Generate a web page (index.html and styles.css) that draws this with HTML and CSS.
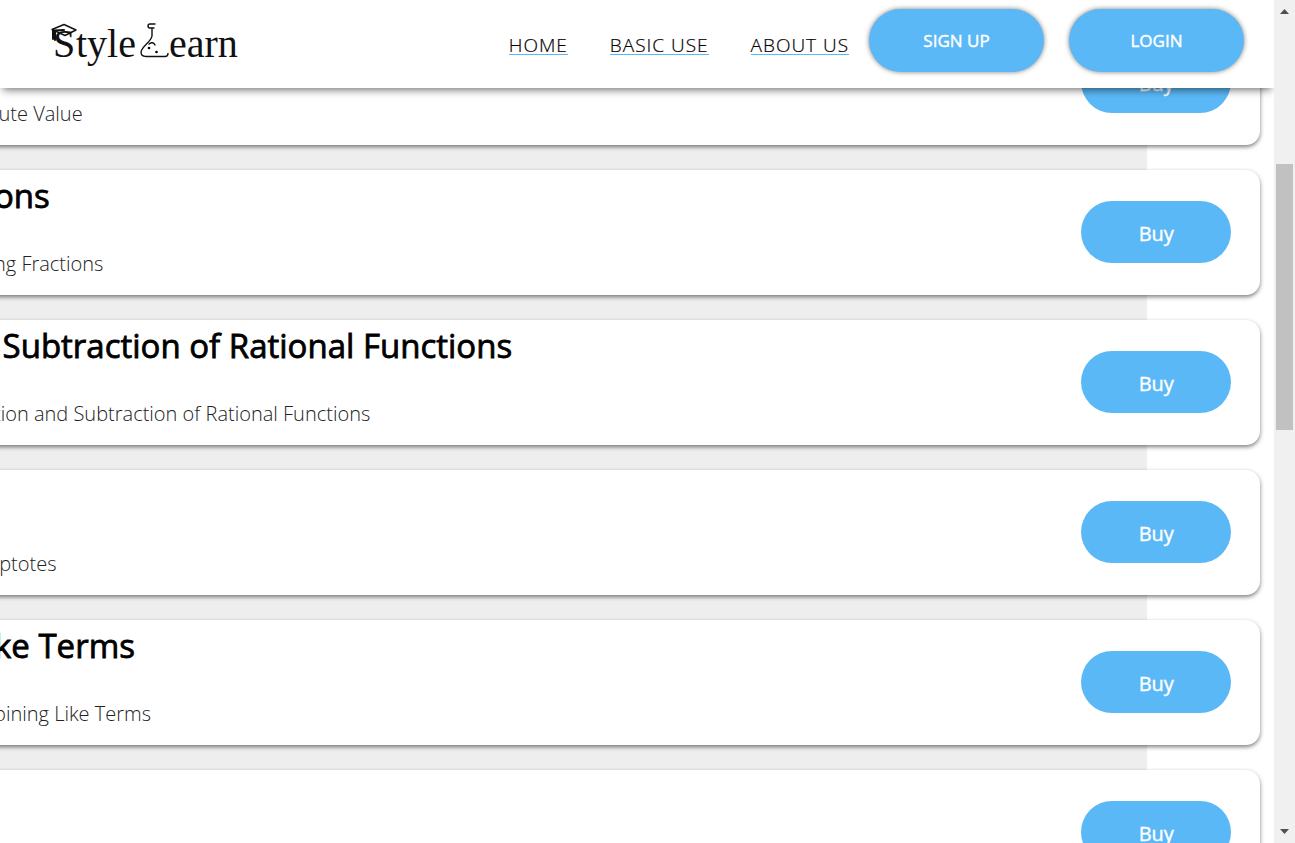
FILE: index.html
```html
<!DOCTYPE html>
<html lang="en">
<head>
<meta charset="utf-8">
<meta name="viewport" content="width=device-width, initial-scale=1">
<title>Style Learn</title>
<link rel="stylesheet" href="styles.css">
</head>
<body>
<div class="window">
  <div class="page">
    <header class="topbar">
      <a class="logo" href="#" aria-label="Style Learn">
        <svg width="196" height="50" viewBox="48 20 196 50">
          <g class="logo-text">
            <text x="53" y="57">S</text>
            <text x="76" y="57">tyle</text>
            <text x="169" y="57">earn</text>
          </g>
          <g fill="none" stroke="#111" stroke-width="1.4" stroke-linejoin="round" stroke-linecap="round">
            <path d="M52 29.500 64 24.500 76 30 65 35.500Z"/>
            <path d="M53 30V39M55 32V40M54 30.500 64 30" stroke-width="2"/>
            <path d="M155 24H150Q148 24 148 26T150 28H154M152 28V36C151 42 142 46 141 52Q141 56.500 146 56.500H165Q168 56.500 168 53.500M149 44Q153 41 155 45"/>
          </g>
          <circle cx="149" cy="48" r="1.300"/><circle cx="156.500" cy="52" r="1.300"/>
        </svg>
      </a>
      <nav class="nav">
        <a href="#">HOME</a>
        <a href="#">BASIC USE</a>
        <a href="#">ABOUT US</a>
      </nav>
      <div class="account">
        <button class="pill pill-account">SIGN UP</button>
        <button class="pill pill-account">LOGIN</button>
      </div>
    </header>
    <main class="catalog">
      <article class="card">
        <div class="info"><h2></h2><p>lute Value</p></div>
        <button class="pill pill-buy">Buy</button>
      </article>
      <article class="card">
        <div class="info"><h2>ons</h2><p>ng Fractions</p></div>
        <button class="pill pill-buy">Buy</button>
      </article>
      <article class="card">
        <div class="info"><h2>&nbsp;Subtraction of Rational Functions</h2><p>tion and Subtraction of Rational Functions</p></div>
        <button class="pill pill-buy">Buy</button>
      </article>
      <article class="card">
        <div class="info"><h2></h2><p>&nbsp;ptotes</p></div>
        <button class="pill pill-buy">Buy</button>
      </article>
      <article class="card">
        <div class="info"><h2>ke Terms</h2><p>bining Like Terms</p></div>
        <button class="pill pill-buy">Buy</button>
      </article>
      <article class="card">
        <div class="info"><h2></h2><p></p></div>
        <button class="pill pill-buy">Buy</button>
      </article>
    </main>
  </div>
  <div class="scrollbar" aria-hidden="true">
    <svg width="9" height="5" viewBox="0 0 9 5"><path d="M0 5 4.500 0 9 5Z"/></svg>
    <div class="track"><div class="thumb"></div></div>
    <svg width="9" height="5" viewBox="0 0 9 5"><path d="M0 0 4.500 5 9 0Z"/></svg>
  </div>
</div>
</body>
</html>
```
FILE: styles.css
```css
* { box-sizing: border-box; }
body {
  margin: 0;
  font-family: "Open Sans", "Noto Sans", sans-serif;
  color: #000;
  background: #fff;
}
.window {
  display: grid;
  grid-template-columns: minmax(0, 1fr) 21px;
  height: 100vh;
  overflow: hidden;
}
.page {
  position: relative;
  overflow: hidden;
}
.topbar {
  position: absolute;
  top: 0;
  left: 0;
  right: 0;
  z-index: 2;
  display: flex;
  align-items: flex-start;
  height: 88px;
  padding: 9px 30px 0 48px;
  background: #fff;
  box-shadow: 0 5px 8px -3px rgba(0, 0, 0, 0.55);
}
.logo {
  margin-top: 11px;
  margin-right: auto;
}
.logo svg { display: block; }
.logo-text {
  font-family: "Liberation Serif", serif;
  font-size: 40px;
  fill: #111;
}
.nav {
  display: flex;
  gap: 42px;
  margin-top: 27px;
  margin-right: 20px;
}
.nav a {
  border-bottom: 1px solid #5bb8f7;
  color: #000;
  font-size: 19px;
  font-weight: 300;
  line-height: 18px;
  letter-spacing: 1px;
  text-decoration: none;
  -webkit-text-stroke: 0.2px;
}
.account {
  display: flex;
  gap: 25px;
}
.pill {
  border: 0;
  border-radius: 32px;
  background: #5bb8f7;
  color: #fff;
  font-family: inherit;
  cursor: pointer;
  -webkit-text-stroke: 0.4px;
}
.pill-account {
  width: 175px;
  height: 63px;
  font-size: 17px;
  box-shadow: 0 0 5px rgba(0, 0, 0, 0.5);
}
.catalog {
  display: flex;
  flex-direction: column;
  gap: 25px;
  width: 90%;
  padding-top: 20px;
  background: #eee;
}
.card {
  display: flex;
  justify-content: space-between;
  align-items: center;
  width: calc(110% + 19px);
  height: 125px;
  margin-left: -20px;
  padding: 0 29px 2px 14px;
  border-radius: 14px;
  background: #fff;
  box-shadow: 0 2px 4px rgba(0, 0, 0, 0.5);
}
.info {
  display: flex;
  flex-direction: column;
  justify-content: space-between;
  align-self: stretch;
  padding: 2px 0 15px;
  white-space: nowrap;
}
.info h2 {
  min-height: 48px;
  margin: 0;
  font-size: 33px;
  font-weight: 500;
  line-height: 48px;
  -webkit-text-stroke: 0.8px;
}
.info p {
  min-height: 28px;
  margin: 0;
  color: #222;
  font-size: 20px;
  font-weight: 300;
  line-height: 28px;
}
.pill-buy {
  width: 150px;
  height: 62px;
  padding-top: 4px;
  font-size: 20px;
}
.scrollbar {
  display: flex;
  flex-direction: column;
  align-items: center;
  padding: 9px 2px;
  background: #f0f0f0;
  fill: #505050;
}
.track {
  flex: 1;
  align-self: stretch;
  padding-top: 150px;
}
.thumb {
  height: 40%;
  min-height: 20px;
  background: #c1c1c1;
}
```
